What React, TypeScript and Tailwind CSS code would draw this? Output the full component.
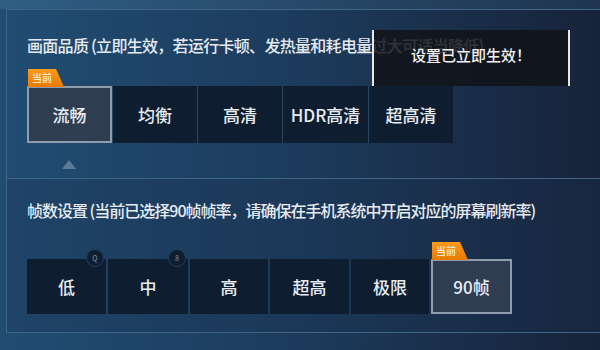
import React from "react";

const font = { fontFamily: '"Noto Sans CJK SC", "Noto Sans", sans-serif' };

function Tag() {
  return (
    <div
      className="absolute -top-[19px] -left-px h-[18px] w-[36px] bg-gradient-to-b from-[#ff9a1a] to-[#e77a05] text-[10px] leading-[18px] text-[#fff1d6] pl-[4px]"
      style={{ clipPath: "polygon(0 0, 78% 0, 100% 100%, 0 100%)" }}
    >
      当前
    </div>
  );
}

function Btn({ label, w, h, selected, tag, dot }: { label: string; w: string; h: string; selected?: boolean; tag?: boolean; dot?: string }) {
  return (
    <div
      className={`relative flex items-center justify-center text-[17px] font-medium text-[#e8ecf1] ${w} ${h} ${
        selected ? "bg-[#2f3d50] border-2 border-[#8f9cab]" : "bg-[#0e1d30]"
      }`}
    >
      {tag && <Tag />}
      {label}
      {dot && (
        <div className="absolute -top-[10px] right-[2px] w-[18px] h-[18px] rounded-full bg-[#0e1d30] border border-[#23405e] flex items-center justify-center text-[7px] text-[#6d8199]">
          {dot}
        </div>
      )}
    </div>
  );
}

export default function App() {
  return (
    <div
      className="relative w-[600px] h-[350px] overflow-hidden bg-gradient-to-r from-[#214d73] via-[#1c3b5c] to-[#17233a]"
      style={font}
    >
      <div className="h-[9px] bg-gradient-to-r from-[#2f5e84] to-[#1f3550]" />
      <div className="ml-[6px] border-l border-t border-[#3e6486] h-[169px] pl-[20px] pt-[25px]">
        <div className="text-[16px] leading-[20px] font-medium text-[#e6ebf1] whitespace-nowrap tracking-[-0.7px]">
          画面品质 (立即生效，若运行卡顿、发热量和耗电量过大可适当降低)
        </div>
        <div className="flex gap-px mt-[31px] bg-[#2a4561] w-fit">
          <Btn label="流畅" w="w-[85px]" h="h-[57px]" selected tag />
          <Btn label="均衡" w="w-[84px]" h="h-[57px]" />
          <Btn label="高清" w="w-[84px]" h="h-[57px]" />
          <Btn label="HDR高清" w="w-[85px]" h="h-[57px]" />
          <Btn label="超高清" w="w-[84px]" h="h-[57px]" />
        </div>
        <div className="mt-[17px] ml-[35px] w-0 h-0 border-l-[7px] border-r-[7px] border-b-[9px] border-l-transparent border-r-transparent border-b-[#5b7b98]" />
      </div>
      <div className="ml-[6px] border-l border-t border-b border-[#3e6486] h-[155px] pl-[20px] pt-[21px] bg-[#1a3350]/30">
        <div className="text-[16px] leading-[20px] font-medium text-[#e6ebf1] whitespace-nowrap tracking-[-1px]">
          帧数设置 (当前已选择90帧帧率，请确保在手机系统中开启对应的屏幕刷新率)
        </div>
        <div className="flex gap-[2px] mt-[39px] w-fit">
          <Btn label="低" w="w-[79px]" h="h-[55px]" dot="Q" />
          <Btn label="中" w="w-[80px]" h="h-[55px]" dot="8" />
          <Btn label="高" w="w-[78px]" h="h-[55px]" />
          <Btn label="超高" w="w-[79px]" h="h-[55px]" />
          <Btn label="极限" w="w-[78px]" h="h-[55px]" />
          <Btn label="90帧" w="w-[81px]" h="h-[55px]" selected tag />
        </div>
      </div>
      <div className="absolute left-[372px] top-[30px] w-[198px] h-[56px] bg-[#111318]/85 border-x-2 border-[#e8e8e8] flex items-center justify-center text-[15px] font-medium text-[#f2f2f2] pb-[6px]">
        设置已立即生效！
      </div>
    </div>
  );
}
